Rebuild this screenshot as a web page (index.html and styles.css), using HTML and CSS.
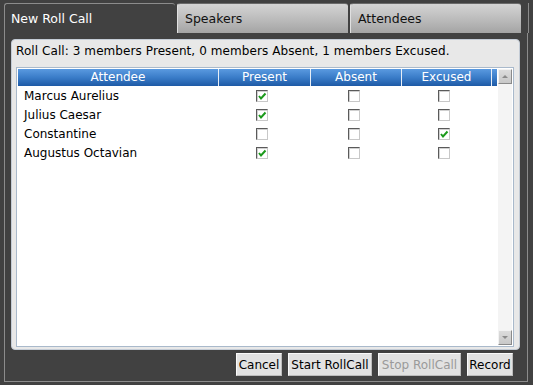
FILE: index.html
```html
<!DOCTYPE html>
<html>
<head>
<meta charset="utf-8">
<link rel="stylesheet" href="styles.css">
</head>
<body>
<div class="app">
  <div class="tabs">
    <div class="tab active">New Roll Call</div>
    <div class="tab">Speakers</div>
    <div class="tab">Attendees</div>
    <div class="tab-rest"></div>
  </div>
  <div class="frame">
    <div class="panel">
      <div class="summary">Roll Call: 3 members Present, 0 members Absent, 1 members Excused.</div>
      <div class="list">
        <div class="grid">
          <div class="row header">
            <div class="cell name">Attendee</div>
            <div class="cell">Present</div>
            <div class="cell">Absent</div>
            <div class="cell">Excused</div>
            <div class="cell filler"></div>
          </div>
          <div class="row">
            <div class="cell name">Marcus Aurelius</div>
            <div class="cell"><span class="cb on"><svg viewBox="0 0 10 10"><path d="M2 5 L4 7.5 L8.5 2.5"/></svg></span></div>
            <div class="cell"><span class="cb"></span></div>
            <div class="cell"><span class="cb"></span></div>
            <div class="cell filler"></div>
          </div>
          <div class="row">
            <div class="cell name">Julius Caesar</div>
            <div class="cell"><span class="cb on"><svg viewBox="0 0 10 10"><path d="M2 5 L4 7.5 L8.5 2.5"/></svg></span></div>
            <div class="cell"><span class="cb"></span></div>
            <div class="cell"><span class="cb"></span></div>
            <div class="cell filler"></div>
          </div>
          <div class="row">
            <div class="cell name">Constantine</div>
            <div class="cell"><span class="cb"></span></div>
            <div class="cell"><span class="cb"></span></div>
            <div class="cell"><span class="cb on"><svg viewBox="0 0 10 10"><path d="M2 5 L4 7.5 L8.5 2.5"/></svg></span></div>
            <div class="cell filler"></div>
          </div>
          <div class="row">
            <div class="cell name">Augustus Octavian</div>
            <div class="cell"><span class="cb on"><svg viewBox="0 0 10 10"><path d="M2 5 L4 7.5 L8.5 2.5"/></svg></span></div>
            <div class="cell"><span class="cb"></span></div>
            <div class="cell"><span class="cb"></span></div>
            <div class="cell filler"></div>
          </div>
        </div>
        <div class="scrollbar">
          <div class="sbtn"><span class="arrow up"></span></div>
          <div class="track"></div>
          <div class="sbtn"><span class="arrow down"></span></div>
        </div>
      </div>
    </div>
    <div class="buttons">
      <button class="btn w-cancel">Cancel</button>
      <button class="btn w-start">Start RollCall</button>
      <button class="btn w-stop disabled">Stop RollCall</button>
      <button class="btn w-record">Record</button>
    </div>
  </div>
</div>
</body>
</html>
```

FILE: styles.css
```css
* { box-sizing: border-box; }
html, body { margin: 0; padding: 0; }
body {
  background: #414141;
  font-family: "DejaVu Sans", Verdana, sans-serif;
  font-size: 12px;
  color: #000;
}
.app {
  width: 533px;
  height: 385px;
  padding-top: 3px;
  overflow: hidden;
}
.tabs {
  display: flex;
  height: 30px;
  margin-left: 4px;
  gap: 2px;
}
.tab {
  width: 171px;
  height: 30px;
  padding-left: 7px;
  line-height: 29px;
  font-size: 12.5px;
  color: #111;
  background: linear-gradient(#d4d4d4, #b8b8b8 60%, #a4a4a4);
  border-radius: 3px 3px 0 0;
  border-top: 1px solid #6a6a6a;
  border-left: 1px solid #e0e0e0;
}
.tab.active {
  background: #414141;
  color: #fff;
  border-top: 1px solid #8c8c8c;
  border-left: 1px solid #8c8c8c;
  padding-left: 6px;
}
.tab-rest {
  flex: 1;
  border-right: 1px solid #8c8c8c;
  margin-right: 4px;
}
.frame {
  width: 524px;
  height: 349px;
  margin-left: 4px;
  border-left: 1px solid #8c8c8c;
  border-right: 1px solid #8c8c8c;
  border-bottom: 1px solid #8c8c8c;
  padding: 6px 6px 5px 6px;
  display: flex;
  flex-direction: column;
}
.panel {
  width: 509px;
  height: 311px;
  background: #e8e8e8;
  border: 1px solid #c4ccd6;
  border-radius: 4px;
  padding: 3px 5px 2px 4px;
  display: flex;
  flex-direction: column;
}
.summary {
  height: 16px;
  line-height: 16px;
  white-space: nowrap;
  letter-spacing: 0.08px;
}
.list {
  margin-top: 8px;
  flex: 1;
  background: #fff;
  border: 1px solid #a9b9cb;
  padding: 1px;
  display: flex;
}
.grid {
  width: 480px;
  border-right: 1px solid #fff;
}
.row {
  display: grid;
  grid-template-columns: 201px 92px 91px 90px 1fr;
  height: 19px;
  align-items: center;
}
.row.header {
  height: 17px;
  background: linear-gradient(#5a9ae0, #3a7cc8 50%, #1e5aa6);
  color: #fff;
}
.header .cell {
  height: 17px;
  line-height: 16px;
  text-align: center;
  border-right: 1px solid #e8eef6;
}
.header .cell.filler { border-right: none; }
.cell {
  display: flex;
  justify-content: center;
  padding-right: 6px;
}
.header .cell { display: block; padding-right: 0; }
.cell.name { justify-content: flex-start; padding-left: 6px; }
.header .cell.name { padding-left: 0; }
.cb {
  width: 12px;
  height: 12px;
  background: #fff;
  border-top: 1px solid #5a5a5a;
  border-left: 1px solid #5a5a5a;
  border-bottom: 1px solid #c8c8c8;
  border-right: 1px solid #c8c8c8;
  box-shadow: inset 1px 1px 0 #d0d0d0;
  display: flex;
  align-items: center;
  justify-content: center;
}
.cb svg {
  width: 10px;
  height: 10px;
}
.cb svg path {
  fill: none;
  stroke: #1c9a1c;
  stroke-width: 2;
}
.scrollbar {
  width: 14px;
  display: flex;
  flex-direction: column;
  background: #f4f4f4;
}
.sbtn {
  height: 15px;
  background: linear-gradient(#dcdcdc, #c8c8c8);
  border: 1px solid #f2f2f2;
  border-right-color: #8a8a8a;
  border-bottom-color: #8a8a8a;
  display: flex;
  align-items: center;
  justify-content: center;
}
.track { flex: 1; }
.arrow {
  width: 0;
  height: 0;
  border-left: 3px solid transparent;
  border-right: 3px solid transparent;
}
.arrow.up { border-bottom: 3px solid #8a8a8a; }
.arrow.down { border-top: 3px solid #8a8a8a; }
.buttons {
  margin-top: 3px;
  display: flex;
  justify-content: flex-end;
  gap: 6px;
  padding-right: 8px;
}
.btn {
  height: 23px;
  font-family: "DejaVu Sans", Verdana, sans-serif;
  font-size: 12px;
  color: #000;
  background: #e2e2e2;
  border: 1px solid #fafafa;
  border-right-color: #bcbcbc;
  border-bottom-color: #bcbcbc;
  padding: 0;
  margin: 0;
  border-radius: 0;
}
.btn.disabled { color: #9a9a9a; }
.w-cancel { width: 46px; }
.w-start { width: 84px; }
.w-stop { width: 83px; }
.w-record { width: 46px; }
```
